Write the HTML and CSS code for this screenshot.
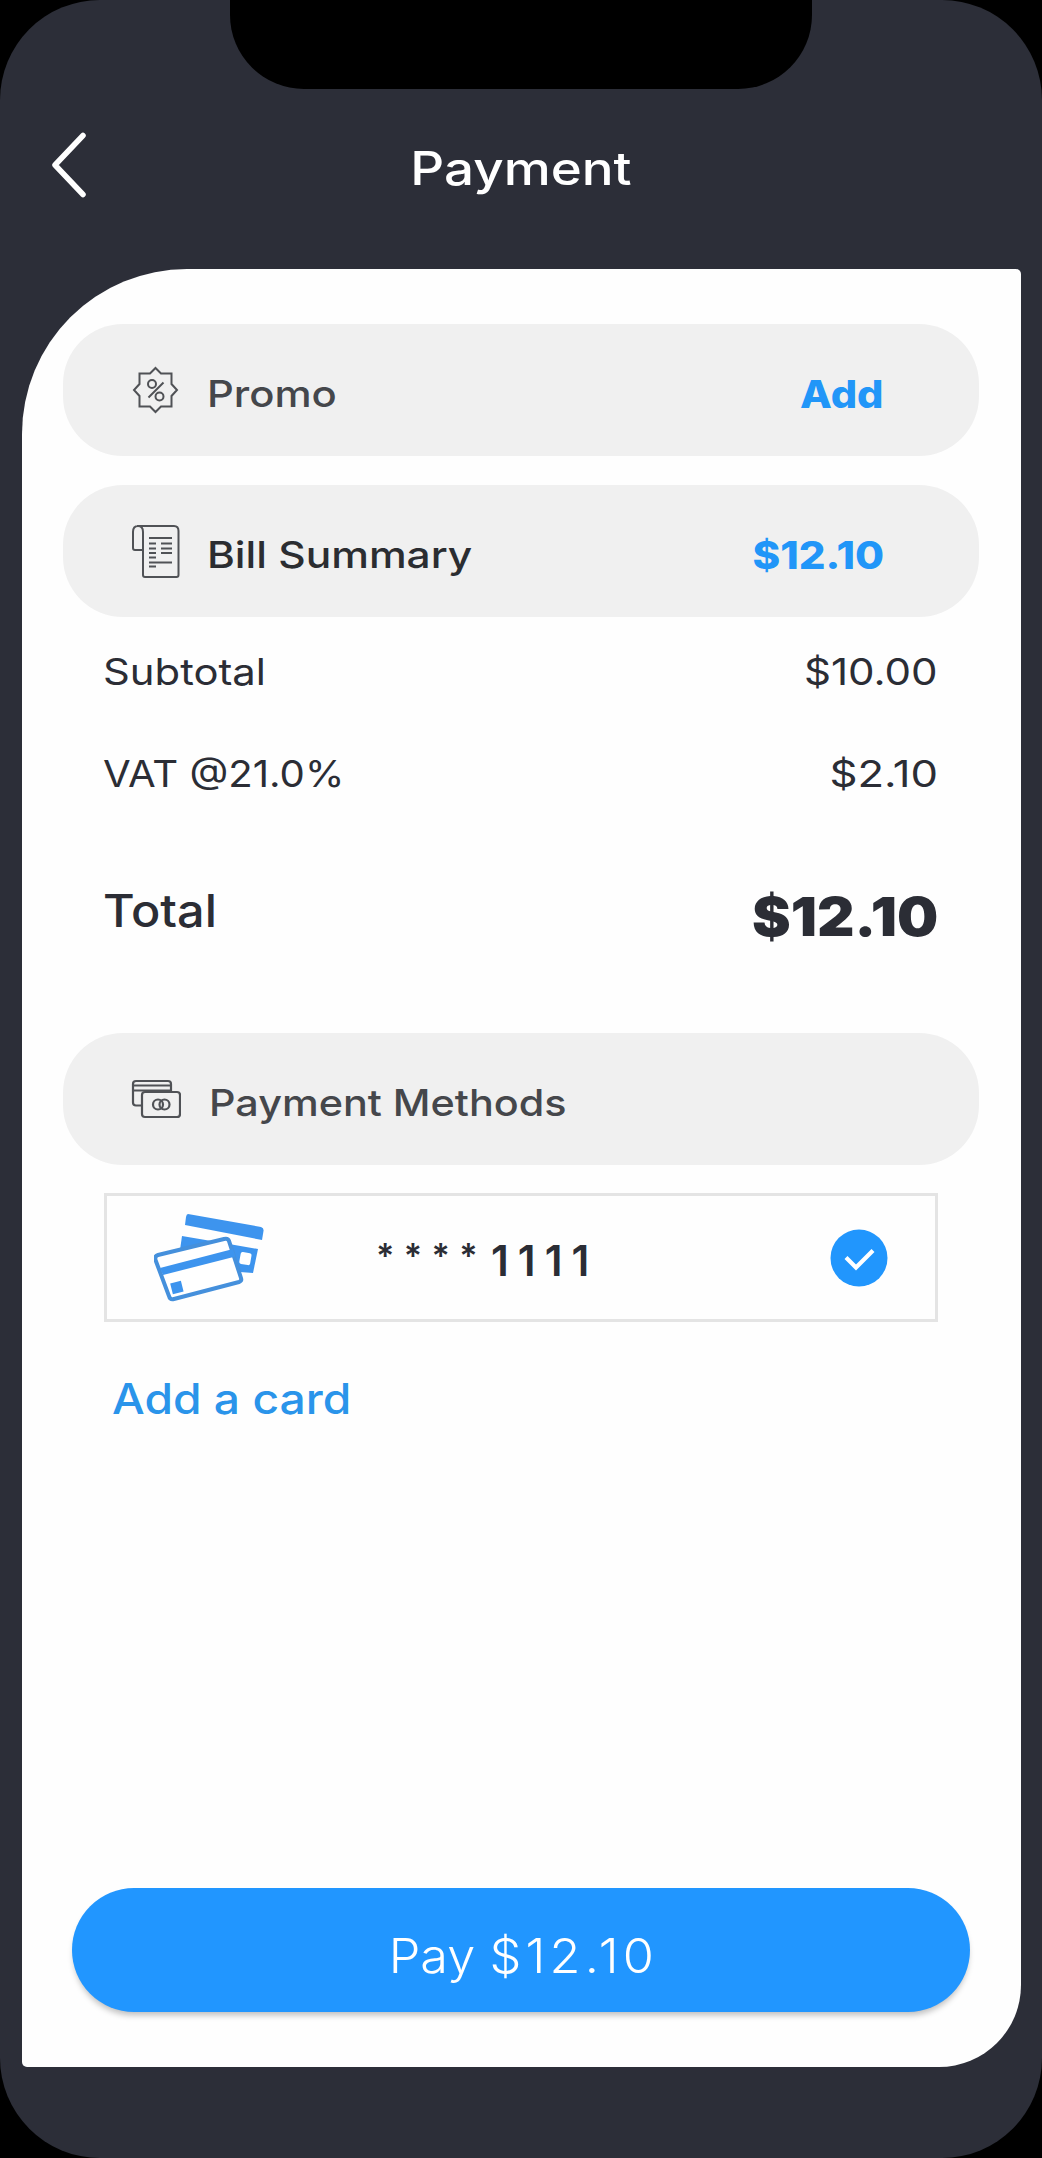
FILE: index.html
```html
<!DOCTYPE html>
<html lang="en">
<head>
<meta charset="utf-8">
<title>Payment</title>
<link rel="stylesheet" href="styles.css">
</head>
<body>
<div class="phone">
  <div class="notch"></div>
  <header class="header">
    <svg class="back" viewBox="0 0 36 66" fill="none" stroke="#fff" stroke-width="5.500" stroke-linecap="round" stroke-linejoin="round"><path d="M32 3.500L4 33L32 62.500"/></svg>
    <h1 class="title">Payment</h1>
  </header>
  <main class="sheet">
    <section class="pill">
      <svg class="icon" viewBox="0 0 50 50" fill="none" stroke="#505256" stroke-width="2"><path d="M24.500 3L30 8.500H40.500V19L46 25L40.500 31V41.500H30L24.500 47L19 41.500H8.500V31L3 25L8.500 19V8.500H19Z"/><circle cx="21" cy="19" r="4"/><circle cx="28.500" cy="31.500" r="4"/><path d="M32.500 17.500L17.500 32.500"/></svg>
      <span class="label promo">Promo</span>
      <a class="action add">Add</a>
    </section>
    <section class="pill">
      <svg class="icon tall" viewBox="0 0 50 56" fill="none" stroke="#505256" stroke-width="2"><path d="M6 3H43Q47.500 3 47.500 8V52Q47.500 54 45.500 54H14Q12 54 12 52V9Q12 3 7 3Q2 3 2 9V25Q2 27 4 27H12"/><path d="M18 15H41M18 20.500H25M30 20.500H41M18 25.500H25M30 25.500H41M18 30H25M30 30H41M18 34.500H25M18 39.500H41M18 43.500H25"/></svg>
      <span class="label bill">Bill Summary</span>
      <span class="action amount">$12.10</span>
    </section>
    <dl class="totals">
      <div class="row"><dt class="subtotal">Subtotal</dt><dd class="subtotal-value">$10.00</dd></div>
      <div class="row vat-row"><dt class="vat">VAT @21.0%</dt><dd class="vat-value">$2.10</dd></div>
      <div class="row total-row"><dt class="total">Total</dt><dd class="total-value">$12.10</dd></div>
    </dl>
    <section class="pill">
      <svg class="icon" viewBox="0 0 50 40" fill="none" stroke="#505256" stroke-width="2.200"><path d="M11 26.500H5Q2 26.500 2 23.500V5Q2 2 5 2H37Q40 2 40 5V13M2 6.500H40M2 11.500H40"/><rect x="11" y="13" width="38" height="25" rx="3"/><circle cx="27" cy="25.500" r="5"/><circle cx="33.500" cy="25.500" r="5"/></svg>
      <span class="label methods">Payment Methods</span>
    </section>
    <div class="card">
      <svg class="cards" viewBox="0 0 112 90">
        <g fill="#3d94ee">
          <path d="M34 1L107 14Q110 15 109.500 18L108 27L31 12L32 4Q32.500 1 34 1Z"/>
          <path d="M28 23L75 31L104 36L99 60L86 59L26 37Z"/>
          <rect x="86" y="39.500" width="11" height="12" rx="2" fill="#fff" transform="rotate(10 91 45)"/>
        </g>
        <path d="M4 42L70 26Q74 25 75 28L87 65Q88 68 85 69L20 86Q16 87 15 83L1.500 47Q.500 43 4 42Z" fill="#fff" stroke="#4590dc" stroke-width="4"/>
        <path d="M6 55L79 36L81.500 43.500L9 62Z" fill="#3d94ee"/>
        <rect x="17.500" y="69" width="11" height="11" fill="#3d94ee" transform="rotate(-14 23 75)"/>
      </svg>
      <span class="number"><span class="mask">****</span><span class="digits">1111</span></span>
      <svg class="check" viewBox="0 0 58 58"><circle cx="29" cy="29" r="28.500" fill="#2196fd"/><path d="M16 28.500L26 38.500L43 21.500" fill="none" stroke="#fff" stroke-width="4.200"/></svg>
    </div>
    <a class="add-card">Add a card</a>
    <button class="pay" type="button"><span class="pay-label">Pay <span class="pay-sum">$12.10</span></span></button>
  </main>
</div>
</body>
</html>
```
FILE: styles.css
```css
* { box-sizing: border-box; }
body { margin: 0; background: #000; font-family: Inter, "Liberation Sans", sans-serif; color: #2b2d35; }
.phone { position: relative; height: 2158px; padding: 89px 21px 91px 22px; display: flex; flex-direction: column; background: #2c2e38; border-radius: 100px; }
.notch { position: absolute; top: 0; left: 230px; width: 582px; height: 89px; background: #000; border-radius: 0 0 74px 74px; }
.header { height: 180px; display: grid; grid-template-columns: 100px 1fr 101px; align-items: start; color: #fff; }
.back { width: 36px; height: 66px; margin: 43px 0 0 29px; }
.title { margin: 53px 0 0; font-size: 46px; line-height: 52px; font-weight: 500; text-align: center; white-space: nowrap; transform: scaleX(1.15); }
.sheet { flex: 1; display: flex; flex-direction: column; background: #fefefe; border-radius: 165px 5px 82px 5px; padding: 55px 42px 55px 41px; }
.pill { height: 132px; flex: none; display: flex; align-items: center; padding: 0 95px 0 68px; background: #f0f0f0; border-radius: 60px; }
.pill + .pill { margin-top: 29px; }
.icon { width: 50px; height: 50px; flex: none; margin-top: -1px; }
.tall { height: 56px; }

/* Wide letterforms: each label is stretched from the edge it is aligned to. */
.label, .add-card, .row dt { transform-origin: left center; }
.action, .row dd { transform-origin: right center; }

.label { flex: 1; margin-left: 26px; padding-top: 8px; font-size: 37px; line-height: 40px; font-weight: 500; color: #45474b; white-space: nowrap; }
.promo { transform: scaleX(1.13); }
.bill { color: #2b2d31; transform: scaleX(1.147); }
.methods { margin-left: 28px; transform: scaleX(1.117); }
.action { padding-top: 8px; font-size: 38px; line-height: 40px; font-weight: 800; color: #2196f8; }
.add { margin-right: 1px; transform: scaleX(1.09); }
.amount { padding-top: 7px; transform: scaleX(1.105); }
.totals { margin: 0 41px; height: 416px; padding-top: 31px; }
.row { display: flex; justify-content: space-between; height: 48px; font-size: 37px; line-height: 48px; white-space: nowrap; }
.row dt { margin: 0 0 0 -1px; }
.row dd { margin: 0; }
.subtotal { transform: scaleX(1.13); }
.vat { transform: scaleX(1.085); }
.subtotal-value { transform: scaleX(1.137); }
.vat-value { transform: scaleX(1.18); }
.vat-row { margin-top: 54px; }
.total-row { height: 60px; margin-top: 83px; line-height: 60px; }
.total { font-size: 45px; font-weight: 500; transform: scaleX(1.08); }
.total-value { padding-top: 6px; font-size: 54px; font-weight: 900; transform: scaleX(1.075); }
.card { flex: none; height: 129px; margin: 28px 41px 0; padding: 0 47px; border: 3px solid #e4e4e4; display: flex; align-items: center; }
.cards { width: 112px; height: 90px; }
.number { flex: 1; display: flex; margin-left: 110px; padding-top: 6px; font-size: 42px; line-height: 42px; font-weight: 600; }
.mask { width: 115px; margin-top: -5px; font-size: 34px; letter-spacing: 9.4px; }
.digits { letter-spacing: 9.1px; }
.check { width: 58px; height: 58px; margin-top: 1px; }
.add-card { margin: 53px 0 0 49px; font-size: 42px; line-height: 48px; font-weight: 500; color: #2a94ea; white-space: nowrap; transform: scaleX(1.1); }
.pay { height: 124px; margin: auto 9px 0; padding: 11px 0 0; border: 0; border-radius: 62px; background: #2196ff; color: #fff; font: 300 48px/52px Inter, sans-serif; box-shadow: 0 5px 6px -2px #bbb; }
.pay-label { display: inline-block; white-space: nowrap; transform: scaleX(1.05); }
.pay-sum { letter-spacing: 4px; margin-right: -4px; }
```
